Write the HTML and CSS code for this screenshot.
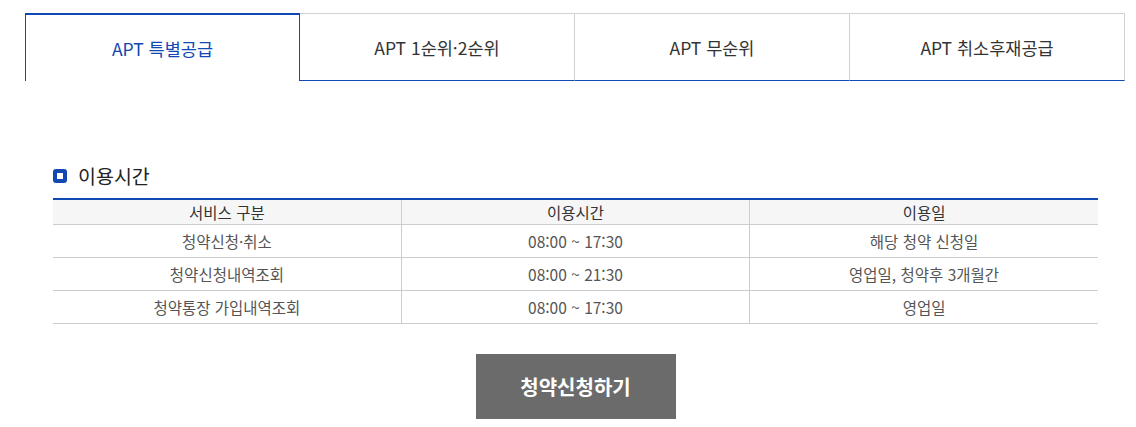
FILE: index.html
```html
<!DOCTYPE html>
<html lang="ko">
<head>
<meta charset="utf-8">
<title>APT 청약</title>
<link rel="stylesheet" href="styles.css">
</head>
<body>
<div class="page">
  <ul class="tabs">
    <li class="tab active">APT 특별공급</li>
    <li class="tab">APT 1순위·2순위</li>
    <li class="tab">APT 무순위</li>
    <li class="tab">APT 취소후재공급</li>
  </ul>
  <div class="content">
    <h3 class="section-title"><span class="bullet"></span>이용시간</h3>
    <table class="info">
      <thead>
        <tr><th>서비스 구분</th><th>이용시간</th><th>이용일</th></tr>
      </thead>
      <tbody>
        <tr><td>청약신청·취소</td><td>08:00 ~ 17:30</td><td>해당 청약 신청일</td></tr>
        <tr><td>청약신청내역조회</td><td>08:00 ~ 21:30</td><td>영업일, 청약후 3개월간</td></tr>
        <tr><td>청약통장 가입내역조회</td><td>08:00 ~ 17:30</td><td>영업일</td></tr>
      </tbody>
    </table>
    <div class="actions">
      <button class="apply">청약신청하기</button>
    </div>
  </div>
</div>
</body>
</html>
```

FILE: styles.css
```css
* { box-sizing: border-box; }
html, body { margin: 0; padding: 0; background: #fff; }
body {
  font-family: "Noto Sans CJK KR", "Noto Sans", sans-serif;
  color: #333;
}
.page { padding: 13px 11px 0 25px; }
.tabs {
  list-style: none;
  margin: 0;
  padding: 0;
  display: flex;
  width: 1100px;
}
.tab {
  flex: 0 0 275px;
  height: 68px;
  display: flex;
  align-items: center;
  justify-content: center;
  font-size: 17.5px;
  color: #333;
  border-top: 1px solid #d2d2d2;
  border-right: 1px solid #d2d2d2;
  border-bottom: 1px solid #1048b4;
  padding-top: 1px;
}
.tab.active {
  color: #1048b4;
  border: 1px solid #1048b4;
  border-top-width: 2px;
  border-bottom: none;
  padding-top: 0;
}
.content { padding: 0 27px 0 28px; }
.section-title {
  margin: 82px 0 0;
  height: 24px;
  display: flex;
  align-items: center;
  font-size: 19.5px;
  font-weight: 400;
  color: #222;
}
.bullet {
  width: 14px;
  height: 14px;
  border: 4px solid #1048b4;
  border-radius: 3px;
  background: #fff;
  margin-right: 11px;
  margin-top: 1px;
}
.info {
  width: 100%;
  margin-top: 11px;
  border-collapse: collapse;
  border-top: 2px solid #1048b4;
  table-layout: fixed;
  font-size: 15.5px;
}
.info th {
  background: #f6f6f6;
  font-weight: 400;
  color: #333;
  height: 25px;
  padding: 0;
  border-bottom: 1px solid #cdcdcd;
}
.info td {
  height: 33px;
  padding: 0;
  text-align: center;
  color: #555;
  border-bottom: 1px solid #cdcdcd;
}
.info th + th, .info td + td { border-left: 1px solid #cdcdcd; }
.actions {
  display: flex;
  justify-content: center;
  margin-top: 30px;
}
.apply {
  width: 200px;
  height: 65px;
  background: #6b6b6b;
  color: #fff;
  border: none;
  font-family: inherit;
  font-size: 20px;
  font-weight: 700;
  cursor: pointer;
}
```
